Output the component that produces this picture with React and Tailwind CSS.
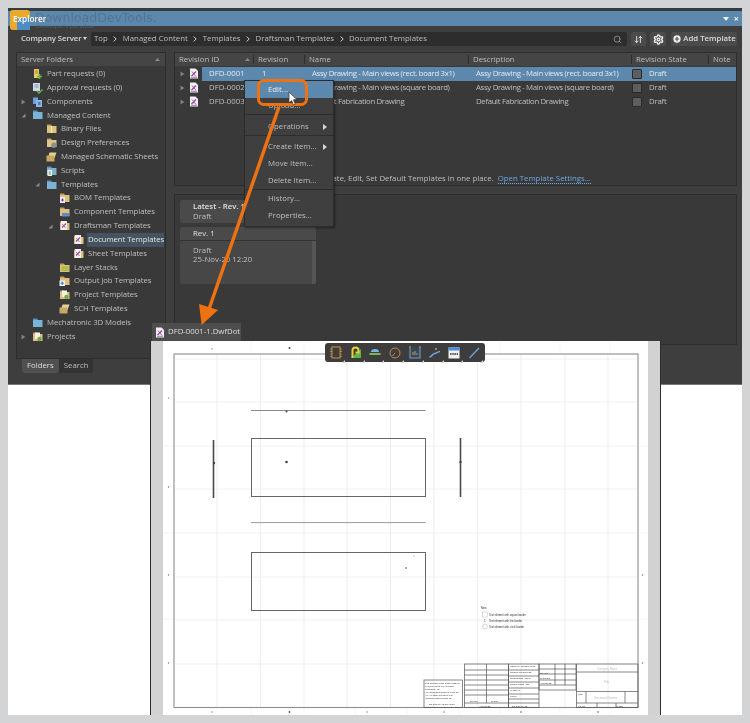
import React from 'react';
import { Search, Settings, ArrowDownUp, CirclePlus } from 'lucide-react';

const treeItems = [
  { level: 0, icon: 'part', label: 'Part requests (0)' },
  { level: 0, icon: 'approval', label: 'Approval requests (0)' },
  { level: 0, arrow: 'closed', icon: 'components', label: 'Components' },
  { level: 0, arrow: 'open', icon: 'blue', label: 'Managed Content' },
  { level: 1, icon: 'tan', label: 'Binary Files' },
  { level: 1, icon: 'prefs', label: 'Design Preferences' },
  { level: 1, icon: 'sheets', label: 'Managed Schematic Sheets' },
  { level: 1, icon: 'scripts', label: 'Scripts' },
  { level: 1, arrow: 'open', icon: 'blue', label: 'Templates' },
  { level: 2, icon: 'bom', label: 'BOM Templates' },
  { level: 2, icon: 'component', label: 'Component Templates' },
  { level: 2, arrow: 'open', icon: 'draft', label: 'Draftsman Templates' },
  { level: 3, icon: 'draft', label: 'Document Templates', selected: true },
  { level: 3, icon: 'draft', label: 'Sheet Templates' },
  { level: 2, icon: 'layers', label: 'Layer Stacks' },
  { level: 2, icon: 'output', label: 'Output Job Templates' },
  { level: 2, icon: 'project', label: 'Project Templates' },
  { level: 2, icon: 'sheets', label: 'SCH Templates' },
  { level: 0, icon: 'blue', label: 'Mechatronic 3D Models' },
  { level: 0, arrow: 'closed', icon: 'project', label: 'Projects' },
];

const levelPad = ['pl-[4px]', 'pl-[18px]', 'pl-[31px]', 'pl-[45px]'];

const rows = [
  { id: 'DFD-0001', rev: '1', name: 'Assy Drawing - Main views (rect. board 3x1)', desc: 'Assy Drawing - Main views (rect. board 3x1)', selected: true },
  { id: 'DFD-0002', rev: '1', name: 'Assy Drawing - Main views (square board)', desc: 'Assy Drawing - Main views (square board)' },
  { id: 'DFD-0003', rev: '1', name: 'Default Fabrication Drawing', desc: 'Default Fabrication Drawing' },
];

const crumbs = ['Top', 'Managed Content', 'Templates', 'Draftsman Templates', 'Document Templates'];

const TreeIcon = ({ kind }) => {
  const folder = (fill, tab) => (
    <>
      <path d="M1 3 L1 10 L10.5 10 L10.5 3 Z" fill={fill} />
      <path d="M1 3 L1 1.6 L5 1.6 L6 3 Z" fill={tab} />
    </>
  );
  return (
    <svg width="11" height="12" viewBox="0 0 11 12" className="shrink-0">
      {kind === 'part' && (
        <>
          <path d="M2 1 H7 V10 H2 Z" fill="#e9c86a" />
          <path d="M3 3 H6 M3 5 H6" stroke="#8a6d1f" strokeWidth="0.7" />
          <path d="M7.5 6 V11 M5 8.5 H10" stroke="#5fbf3c" strokeWidth="1.6" />
        </>
      )}
      {kind === 'approval' && (
        <>
          <path d="M1 1 H8 V9 H1 Z" fill="#cfd8e6" />
          <path d="M2.5 3 H6.5 M2.5 5 H6.5" stroke="#5b7fa8" strokeWidth="0.7" />
          <path d="M5 9 L7 11 L10.5 7.5" stroke="#5fbf3c" strokeWidth="1.4" fill="none" />
        </>
      )}
      {kind === 'components' && (
        <>
          <path d="M1 1.5 H6 V8 H1 Z" fill="#6f9fd8" />
          <path d="M4 4 H10 V11 H4 Z" fill="#8fb7e6" />
          <path d="M6 6 H8.5 V9 H6 Z" fill="#4a78b5" />
        </>
      )}
      {kind === 'blue' && folder('#79b3d8', '#5c93ba')}
      {kind === 'tan' && (
        <>
          {folder('#dfc07c', '#c4a25e')}
          <path d="M5.5 3 V10" stroke="#fff0c4" strokeWidth="1" />
        </>
      )}
      {kind === 'prefs' && (
        <>
          {folder('#dcc48a', '#c4a25e')}
          <circle cx="7.8" cy="8.2" r="2.6" fill="#8e8e8e" />
        </>
      )}
      {kind === 'sheets' && (
        <>
          <path d="M3.5 1.5 L10.5 1.5 L8.5 7 L2 7 Z" fill="#e6d09a" />
          <path d="M0.5 4.5 L8.5 4.5 L8.5 10.5 L0.5 10.5 Z" fill="#c9a866" />
        </>
      )}
      {kind === 'scripts' && (
        <>
          {folder('#7fb3c9', '#5c93ba')}
          <path d="M1.5 5 H6 V11 H1.5 Z" fill="#f1f1f1" />
          <path d="M2.6 7 H5 M2.6 9 H5" stroke="#3e9b57" strokeWidth="0.9" />
        </>
      )}
      {kind === 'bom' && (
        <>
          {folder('#dfc07c', '#c4a25e')}
          <path d="M1 5 H6 V11 H1 Z" fill="#efeaf5" />
          <path d="M2 8 H5 M3.5 6.4 V9.6" stroke="#7a46a8" strokeWidth="1" />
        </>
      )}
      {kind === 'component' && (
        <>
          {folder('#dfc07c', '#c4a25e')}
          <path d="M3 7 H10 V10.5 H3 Z" fill="#5f8fd0" />
        </>
      )}
      {kind === 'draft' && (
        <>
          {folder('#dfc07c', '#c4a25e')}
          <path d="M2 1 H8 V10 H2 Z" fill="#f3f1f6" />
          <path d="M3 7.5 L7 3.5" stroke="#7b4ab0" strokeWidth="1.1" />
          <path d="M3.2 4 L6.5 8" stroke="#c04a62" strokeWidth="0.8" />
        </>
      )}
      {kind === 'layers' && (
        <>
          {folder('#dfc07c', '#c4a25e')}
          <path d="M2.5 4.5 H9.5 V9 H2.5 Z" fill="#93b84b" />
          <path d="M2.5 6 H9.5 M2.5 7.5 H9.5" stroke="#d9c14a" strokeWidth="0.7" />
        </>
      )}
      {kind === 'output' && (
        <>
          {folder('#dfc07c', '#c4a25e')}
          <path d="M0.5 5.5 H6 V11 H0.5 Z" fill="#eef2f8" />
          <path d="M3.2 6.5 V10 M1.5 8.2 H5" stroke="#3c78c0" strokeWidth="1" />
        </>
      )}
      {kind === 'project' && (
        <>
          {folder('#dfc07c', '#c4a25e')}
          <path d="M3 1.5 H8 V8 H3 Z" fill="#f1f1f1" />
          <circle cx="7.5" cy="8" r="2.2" fill="#6fae3f" />
        </>
      )}
    </svg>
  );
};

const DocIcon = () => (
  <svg width="10" height="11" viewBox="0 0 10 11" className="shrink-0">
    <path d="M1 0.5 H6.5 L9 3 V10.5 H1 Z" fill="#f2eff5" />
    <path d="M2.5 8 L7 3.5" stroke="#7b4ab0" strokeWidth="1.2" />
    <path d="M3 3.5 L7 8.5" stroke="#c2475f" strokeWidth="0.9" />
    <path d="M2 9.3 H8" stroke="#7b4ab0" strokeWidth="0.7" />
  </svg>
);

const Arrow = ({ type }) => {
  if (type === 'open') {
    return (
      <svg width="5" height="5" viewBox="0 0 5 5">
        <path d="M4.5 0.5 V4.5 H0.5 Z" fill="#8a8a8a" />
      </svg>
    );
  }
  return (
    <svg width="5" height="6" viewBox="0 0 5 6">
      <path d="M0.5 0.5 L4.5 3 L0.5 5.5 Z" fill="#808080" />
    </svg>
  );
};

const Chevron = () => (
  <svg width="4" height="6" viewBox="0 0 4 6" className="shrink-0">
    <path d="M0.7 0.5 L3.2 3 L0.7 5.5" stroke="#d6d6d6" strokeWidth="1" fill="none" />
  </svg>
);

const MenuItem = ({ label, hot, sub, divider, tall }) => (
  <div className={`flex items-center justify-between pl-[23px] pr-[6px] ${tall ? 'h-[17px]' : 'h-[16.5px]'} ${hot ? 'bg-[#5d88ae] text-[#e8edf2]' : ''} ${divider ? 'border-b border-[#2e2e2e]' : ''}`}>
    <span>{label}</span>
    {sub && (
      <svg width="4" height="6" viewBox="0 0 4 6">
        <path d="M0 0 L4 3 L0 6 Z" fill="#d8d8d8" />
      </svg>
    )}
  </div>
);

const ToolCorner = () => (
  <svg width="3" height="3" viewBox="0 0 3 3" className="absolute right-[-2px] bottom-[-3px]">
    <path d="M3 0 V3 H0 Z" fill="#d6d6d6" />
  </svg>
);

const tools = [
  <g key="a">
    <rect x="3" y="1" width="8" height="11" fill="none" stroke="#c9963c" strokeWidth="1" />
    <path d="M1 3 H3 M1 5.5 H3 M1 8 H3 M1 10.5 H3 M11 3 H13 M11 5.5 H13 M11 8 H13 M11 10.5 H13" stroke="#c9963c" strokeWidth="0.8" />
  </g>,
  <g key="b">
    <path d="M2 12 L12 12 L12 3 Z" fill="#5fb544" />
    <path d="M3.5 12 V4.5 A3 3 0 0 1 9.5 4.5 V6.5 H6.5" stroke="#e9cf3a" strokeWidth="2" fill="none" />
  </g>,
  <g key="c">
    <path d="M3 6 A4 3 0 0 1 11 6 Z" fill="#7fb3dc" />
    <rect x="1.5" y="7" width="11" height="2" fill="#7db55c" />
  </g>,
  <g key="d">
    <circle cx="7" cy="7" r="5" fill="none" stroke="#c98a3c" strokeWidth="1" />
    <path d="M7 7 L4.5 10" stroke="#6c8fb5" strokeWidth="1" />
  </g>,
  <g key="e">
    <path d="M2 1.5 V12 H12 V1.5" fill="#3c4650" stroke="#6f9ccb" strokeWidth="1.1" />
    <path d="M5 9 V6 M7 9 V5 M9 9 V7" stroke="#c9a86a" strokeWidth="0.9" />
    <path d="M1 1 H3 M11 1 H13" stroke="#d9a53c" strokeWidth="1" />
  </g>,
  <g key="f">
    <path d="M1.5 11 C4 11 4 8 6.5 7.5 C9 7 9 6 12 5.5" stroke="#6fa5dd" strokeWidth="1.6" fill="none" />
    <path d="M8 2 V4" stroke="#d9d9d9" strokeWidth="1" />
  </g>,
  <g key="g">
    <rect x="1.5" y="1.5" width="11" height="11" fill="#f0f0f0" />
    <rect x="1.5" y="1.5" width="11" height="3" fill="#4a90d9" />
    <path d="M3 8 H11" stroke="#333" strokeWidth="1.6" strokeDasharray="1.6 0.6" />
  </g>,
  <g key="h">
    <path d="M2.5 12 L12 2" stroke="#6fa5dd" strokeWidth="1.3" />
  </g>,
];

const SheetDrawing = () => (
  <svg viewBox="163 341 485 374" className="block w-full h-full">
    <rect x="163" y="341" width="485" height="374" fill="#ffffff" />
    {[217, 260.5, 304, 347, 390.5, 434, 477.7, 521, 565, 608].map((x) => (
      <path key={x} d={`M${x} 355 V707`} stroke="#e8e8e8" strokeWidth="0.8" />
    ))}
    {[359, 402, 446, 489, 533, 577, 620, 664].map((y) => (
      <path key={y} d={`M175 ${y} H637`} stroke="#ececec" strokeWidth="0.8" />
    ))}
    {[251, 304, 355, 407, 459, 500, 560, 610].map((x) => (
      <path key={x} d={`M${x} 342 V354 M${x} 708 V714`} stroke="#efefef" strokeWidth="0.6" />
    ))}
    {[446, 533, 619].map((y) => (
      <path key={y} d={`M163 ${y} H174 M639 ${y} H648`} stroke="#ececec" strokeWidth="0.6" />
    ))}
    <rect x="174" y="354" width="464" height="353.5" fill="none" stroke="#8c8c8c" strokeWidth="1.1" />
    <path d="M251 410.5 H425.5" stroke="#8a8a8a" strokeWidth="1" />
    <path d="M251 522.6 H425.5" stroke="#9a9a9a" strokeWidth="1" />
    <rect x="251.5" y="438.5" width="174" height="58" fill="none" stroke="#666666" strokeWidth="1" />
    <rect x="251.5" y="552.5" width="174" height="58" fill="none" stroke="#666666" strokeWidth="1" />
    <path d="M213.5 440 V498" stroke="#4a4a4a" strokeWidth="1.6" />
    <path d="M460.5 438 V497" stroke="#4a4a4a" strokeWidth="1.6" />
    <g fill="#444">
      <circle cx="286.5" cy="411.5" r="1" />
      <circle cx="286.5" cy="462" r="1.3" />
      <circle cx="214" cy="463" r="1.2" />
      <circle cx="460.5" cy="462" r="1.2" />
      <circle cx="406" cy="568" r="0.8" />
      <circle cx="414" cy="556" r="0.6" fill="#888" />
      <circle cx="212" cy="349" r="0.7" fill="#777" />
      <circle cx="289.5" cy="348" r="1" fill="#444" />
      <circle cx="168.5" cy="398" r="0.7" fill="#888" />
      <circle cx="168.5" cy="487" r="0.7" fill="#666" />
      <circle cx="168.5" cy="575" r="0.7" fill="#777" />
      <circle cx="168.5" cy="663" r="0.7" fill="#777" />
      <circle cx="642.5" cy="575" r="0.7" fill="#666" />
      <circle cx="642.5" cy="663" r="0.7" fill="#666" />
      <circle cx="212" cy="712" r="0.7" fill="#777" />
      <circle cx="289.5" cy="712" r="0.9" fill="#555" />
      <circle cx="367" cy="712" r="0.7" fill="#777" />
      <circle cx="444" cy="712" r="0.7" fill="#666" />
      <circle cx="521" cy="712" r="0.8" fill="#555" />
      <circle cx="598" cy="712" r="0.8" fill="#555" />
    </g>
    <g fontFamily="'Liberation Sans', sans-serif" fontSize="2.6" fill="#333">
      <text x="481" y="609">Note</text>
      <rect x="482.5" y="612" width="5" height="5" fill="none" stroke="#aaa" strokeWidth="0.4" />
      <text x="489" y="615.5">Text element with square border</text>
      <text x="484" y="621.5">1.</text>
      <text x="489" y="621.5">Text element with line border</text>
      <circle cx="485" cy="626.5" r="2.4" fill="none" stroke="#999" strokeWidth="0.4" />
      <text x="489" y="627.5">Text element with circle border</text>
    </g>
    <g fill="none" stroke="#555555" strokeWidth="0.7">
      <rect x="424" y="680" width="38.5" height="27.5" />
      <rect x="464.5" y="664" width="44" height="43.5" />
      <rect x="508.5" y="664" width="30.5" height="43.5" />
      <rect x="539" y="664" width="37" height="26" />
      <rect x="576.5" y="664" width="61.5" height="43.5" />
      <path d="M486.5 664 V703 M464.5 670 H508.5 M464.5 675 H508.5 M464.5 680 H508.5 M464.5 685 H508.5 M464.5 690 H508.5 M464.5 695 H508.5 M464.5 703 H508.5" />
      <path d="M508.5 670 H539 M508.5 676 H539 M508.5 682 H539 M508.5 688 H539 M508.5 694 H539 M508.5 699 H539 M508.5 703 H539" />
      <path d="M539 669 H576 M539 674 H576 M539 680 H576 M539 685 H576 M555 664 V685 M565 664 V685" />
      <path d="M576.5 672 H638 M576.5 691.5 H638 M576.5 703 H638 M586 691.5 V703 M625 691.5 V703 M597 703 V707.5 M616 703 V707.5" />
    </g>
    <g fill="#333" fontFamily="'Liberation Sans', sans-serif" fontSize="2.1">
      <text x="425" y="683.5">THE INFORMATION CONTAINED IN</text>
      <text x="425" y="686.5">THIS DRAWING IS THE SOLE</text>
      <text x="425" y="689.5">PROPERTY OF</text>
      <text x="425" y="693">ANY REPRODUCTION IN PART OR</text>
      <text x="425" y="696">AS A WHOLE WITHOUT THE</text>
      <text x="425" y="699">WRITTEN PERMISSION OF</text>
      <text x="429" y="704.5">DO NOT SCALE DRAWING</text>
      <text x="470" y="701.5">DRAWN</text>
      <text x="491" y="701.5">CHECK</text>
      <text x="479" y="706.5">APPROVED</text>
      <text x="510" y="667">COMPANY INFORMATION</text>
      <text x="510" y="673">UNLESS OTHERWISE</text>
      <text x="510" y="679">DIMENSIONS ARE IN</text>
      <text x="510" y="685">TOLERANCES ARE</text>
      <text x="510" y="691">MATERIAL</text>
      <text x="510" y="697">FINISH</text>
      <text x="512" y="706.5">DO NOT SCALE</text>
      <text x="540" y="674">DRAWN</text>
      <text x="540" y="679">CHECKED</text>
      <text x="540" y="684">APPROVED</text>
      <text x="578" y="695">SIZE</text>
      <text x="578" y="706.5">SCALE</text>
      <text x="616" y="706.5">SHEET</text>
    </g>
    <g fill="#bdbdbd" fontFamily="'Liberation Sans', sans-serif" fontSize="2.8">
      <text x="597" y="669.5">Company Name</text>
      <text x="604" y="683">Title</text>
      <text x="594" y="699">Document Number</text>
    </g>
  </svg>
);

export default function App() {
  return (
    <div className="relative w-[750px] h-[723px] overflow-hidden bg-[#d3d4d5] pt-2 font-['Open_Sans',sans-serif] text-[7.8px] leading-none text-[#bfbfbf] blur-[0.4px]">
      {/* Explorer panel */}
      <div className="ml-2 w-[734px] h-[376px] bg-[#3e3e3e] border-t-[3px] border-[#363b40] flex flex-col">
        <div className="h-[15px] bg-[#5c88ae] flex items-center justify-end gap-[5px] pr-[3px] text-[#eef3f7] shrink-0">
          <svg width="6" height="4" viewBox="0 0 6 4"><path d="M0 0 H6 L3 4 Z" fill="#eef3f7" /></svg>
          <span className="text-[9px] font-bold">×</span>
        </div>
        <div className="h-[26px] shrink-0 flex items-center pl-[13px] pr-[5px]">
          <div className="w-[70px] shrink-0 flex items-center gap-[2px] font-semibold text-[#d9d9d9] tracking-[-0.1px]">
            <span className="whitespace-nowrap">Company Server</span>
            <svg width="4" height="3" viewBox="0 0 4 3" className="shrink-0"><path d="M0 0 H4 L2 3 Z" fill="#d9d9d9" /></svg>
          </div>
          <div className="w-[536px] h-[14px] bg-[#2d2d2d] rounded-[2px] flex items-center pl-[3px] pr-[5px] gap-[5.5px] shrink-0">
            {crumbs.map((c, i) => (
              <React.Fragment key={c}>
                {i > 0 && <Chevron />}
                <span className="whitespace-nowrap">{c}</span>
              </React.Fragment>
            ))}
            <Search size={9} className="ml-auto text-[#9c9c9c]" />
          </div>
          <div className="ml-[4px] w-[15px] h-[14px] bg-[#4b4b4b] rounded-[2px] flex items-center justify-center">
            <ArrowDownUp size={9} className="text-[#e4e4e4]" strokeWidth={2.5} />
          </div>
          <div className="ml-[4px] w-[16px] h-[14px] bg-[#4b4b4b] rounded-[2px] flex items-center justify-center">
            <Settings size={11} className="text-[#f0f0f0]" strokeWidth={3} />
          </div>
          <div className="ml-[5px] w-[66px] h-[14px] bg-[#4b4b4b] rounded-[2px] flex items-center justify-center gap-[1px] text-[#dcdcdc] font-semibold">
            <CirclePlus size={10} className="fill-[#f0f0f0] text-[#4b4b4b]" strokeWidth={2.5} />
            <span className="whitespace-nowrap">Add Template</span>
          </div>
        </div>

        <div className="flex gap-2 pl-2 pr-[5px] flex-1 min-h-0">
          {/* Server folders */}
          <div className="w-[150px] shrink-0 flex flex-col">
            <div className="h-[307px] bg-[#393939] border border-[#2d2d2d] flex flex-col">
              <div className="h-[13px] bg-[#454545] flex items-center justify-between pl-[4px] pr-[5px] shrink-0">
                <span>Server Folders</span>
                <svg width="5" height="3" viewBox="0 0 5 3"><path d="M0 3 H5 L2.5 0 Z" fill="#8a8a8a" /></svg>
              </div>
              <div className="pt-[1px] tracking-[-0.1px]">
                {treeItems.map((t) => (
                  <div key={t.label} className={`h-[13.84px] flex items-center ${levelPad[t.level]}`}>
                    <span className="w-[11px] shrink-0 flex items-center">{t.arrow && <Arrow type={t.arrow} />}</span>
                    <TreeIcon kind={t.icon} />
                    <span className={`ml-[3px] whitespace-nowrap h-[13.84px] flex items-center pl-[1px] ${t.selected ? 'flex-1 bg-[#45525f] text-[#e0e4e8] mr-[1px]' : ''}`}>{t.label}</span>
                  </div>
                ))}
              </div>
            </div>
            <div className="flex pl-[6px]">
              <div className="h-[14px] px-[5px] bg-[#505050] rounded-b-[3px] flex items-center text-[#dedede]">Folders</div>
              <div className="h-[14px] px-[5px] bg-[#333333] rounded-b-[3px] flex items-center">Search</div>
            </div>
          </div>

          <div className="flex-1 flex flex-col gap-2">
            {/* Revisions table */}
            <div className="h-[134px] bg-[#393939] border border-[#2d2d2d] flex flex-col relative">
              <div className="h-[13px] bg-[#454545] grid grid-cols-[78px_51px_164px_163px_77px_1fr] items-center shrink-0">
                <div className="pl-[4px] flex items-center justify-between pr-[3px]">
                  <span>Revision ID</span>
                  <svg width="5" height="3" viewBox="0 0 5 3"><path d="M0 3 H5 L2.5 0 Z" fill="#8a8a8a" /></svg>
                </div>
                {['Revision', 'Name', 'Description', 'Revision State', 'Note'].map((h) => (
                  <div key={h} className="pl-[4px] border-l border-[#2d2d2d] h-[9px] flex items-center whitespace-nowrap">{h}</div>
                ))}
              </div>
              <div className="pt-[1px]">
                {rows.map((r) => (
                  <div key={r.id} className="h-[13.84px] grid grid-cols-[27px_51px_51px_164px_163px_1fr] items-center">
                    <div className="flex items-center pl-[5px] gap-[4px]">
                      <Arrow type="closed" />
                      <DocIcon />
                    </div>
                    <div className={`col-span-5 h-full grid grid-cols-[51px_51px_164px_163px_1fr] items-center ${r.selected ? 'bg-[#5d88ae] text-[#e4e9ee]' : ''}`}>
                      <div className="pl-[7px] whitespace-nowrap">{r.id}</div>
                      <div className="pl-[9px]">{r.rev}</div>
                      <div className="pl-[8px] whitespace-nowrap tracking-[-0.33px]">{r.name}</div>
                      <div className="pl-[8px] whitespace-nowrap tracking-[-0.33px]">{r.desc}</div>
                      <div className="pl-[1px] flex items-center gap-[7px]">
                        <span className="w-[10px] h-[10px] bg-[#5e5e5e] border border-[#2a2a2a] rounded-[1px]" />
                        <span className="tracking-[-0.2px]">Draft</span>
                      </div>
                    </div>
                  </div>
                ))}
              </div>
              <div className="mt-auto pb-[1px] flex justify-center gap-[4px]">
                <span className="whitespace-nowrap">Create, Edit, Set Default Templates in one place.</span>
                <span className="whitespace-nowrap text-[#6fa8dc] border-b border-dotted border-[#6fa8dc]">Open Template Settings...</span>
              </div>
            </div>

            {/* Revision history */}
            <div className="h-[151px] bg-[#393939] border border-[#2d2d2d] p-[5px]">
              <div className="w-[136px] h-[23px] bg-[#4a4a4a] rounded-[2px] pl-[13px] flex flex-col justify-center gap-[2px]">
                <span className="font-semibold text-[#e0e0e0]">Latest - Rev. 1</span>
                <span>Draft</span>
              </div>
              <div className="w-[136px] mt-[4px] rounded-[2px] overflow-hidden">
                <div className="h-[14px] bg-[#4a4a4a] border-b border-[#333333] pl-[13px] flex items-center text-[#e0e0e0]">Rev. 1</div>
                <div className="h-[43px] bg-[#474747] border-r-4 border-[#555555] pl-[13px] pt-[6px] flex flex-col gap-[1px]">
                  <span>Draft</span>
                  <span>25-Nov-20 12:20</span>
                </div>
              </div>
            </div>
          </div>
        </div>
      </div>
      <div className="ml-2 w-[734px] h-[331px] bg-white border-t border-[#777777]" />

      {/* Logo and watermark */}
      <div className="absolute left-[10px] top-[10px] w-[20px] h-[20px] rounded-[3px] bg-[#e9a92f] flex items-end justify-end">
        <div className="w-[13px] h-[12px] rounded-tl-[2px] bg-[#4f8cc4]" />
      </div>
      <span className="absolute left-[35px] top-[12px] text-[#4f6b85] opacity-70 text-[12.5px] font-['DejaVu_Sans',sans-serif] whitespace-nowrap">DownloadDevTools.</span>
      <span className="absolute left-[36px] top-[23px] text-[#4f6b85] opacity-80 text-[6px] whitespace-nowrap">developer's paradise</span>
      <span className="absolute left-[13px] top-[15px] text-white text-[8.2px] font-semibold whitespace-nowrap">Explorer</span>

      {/* Context menu */}
      <div className="absolute left-[244px] top-[80px] w-[90px] bg-[#3f3f3f] border border-[#2c2c2c] shadow-[1px_1px_2px_rgba(0,0,0,0.4)] pb-[1px]">
        <MenuItem label="Edit..." hot tall />
        <MenuItem label="Upload..." divider />
        <div className="h-[4px]" />
        <MenuItem label="Operations" sub divider tall />
        <div className="h-[3px]" />
        <MenuItem label="Create Item..." sub tall />
        <MenuItem label="Move Item..." tall />
        <MenuItem label="Delete Item..." divider tall />
        <div className="h-[1px]" />
        <MenuItem label="History..." tall />
        <MenuItem label="Properties..." tall />
      </div>

      {/* Drawing window */}
      <div className="absolute left-[150px] top-[323px] w-[511px] h-[392px] flex flex-col">
        <div className="h-[18px] shrink-0 flex">
          <div className="w-[89px] ml-[2px] bg-[#4d4d4d] flex items-center gap-[3px] pl-[3px] text-[#dedede] whitespace-nowrap">
            <DocIcon />
            <span>DFD-0001-1.DwfDot</span>
          </div>
        </div>
        <div className="flex-1 min-h-0 bg-[#d2d2d2] px-[12px] border-x border-[#2c2c2c]">
          <SheetDrawing />
        </div>
        <div className="absolute left-[175px] top-[20px] w-[160px] h-[19px] bg-[#3d3d3d] rounded-[3px] flex items-center justify-between px-[4px]">
          {tools.map((t, i) => (
            <span key={i} className="relative w-[14px] h-[14px]">
              <svg width="14" height="14" viewBox="0 0 14 14">{t}</svg>
              <ToolCorner />
            </span>
          ))}
        </div>
      </div>

      {/* Orange callout */}
      <div className="absolute left-[257px] top-[79px] w-[51px] h-[27px] rounded-[7px] border-[3px] border-[#ee7212]" />
      <svg width="750" height="723" viewBox="0 0 750 723" className="absolute left-0 top-0 pointer-events-none">
        <path d="M279 107 L208 312" stroke="#ee7212" strokeWidth="3.4" />
        <path d="M201.6 325 L199 304 L218 310 Z" fill="#ee7212" />
        <path d="M289 92 L289 103 L291.6 100.6 L293.6 105 L295.4 104.2 L293.4 99.8 L296.8 99.6 Z" fill="#ffffff" stroke="#333333" strokeWidth="0.7" />
      </svg>
    </div>
  );
}
